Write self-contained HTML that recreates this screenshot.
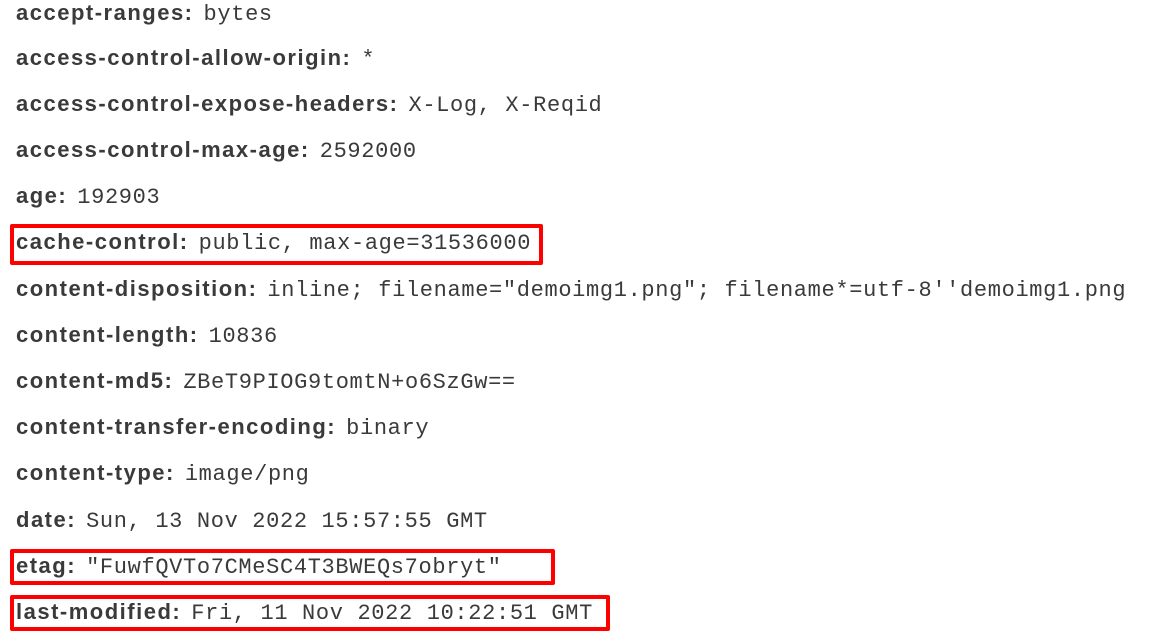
<!DOCTYPE html>
<html><head><style>
body{margin:0;width:1154px;height:641px;background:#fff;overflow:hidden;position:relative;color:#333;}
.r{position:absolute;left:16px;height:46px;line-height:46px;white-space:nowrap;}
.n{font-family:"Liberation Sans",sans-serif;font-weight:bold;font-size:22px;letter-spacing:1.5px;color:#3a3a3a;}
.v{font-family:"Liberation Mono",monospace;font-size:22px;letter-spacing:0.65px;color:#3a3a3a;margin-left:10px;}
.b{position:absolute;border:4px solid #f00;box-sizing:border-box;border-radius:2px;}
</style></head><body>
<div class="r" style="top:-10px"><span class="n">accept-ranges:</span><span class="v">bytes</span></div>
<div class="r" style="top:35px"><span class="n">access-control-allow-origin:</span><span class="v">*</span></div>
<div class="r" style="top:81px"><span class="n">access-control-expose-headers:</span><span class="v">X-Log, X-Reqid</span></div>
<div class="r" style="top:127px"><span class="n">access-control-max-age:</span><span class="v">2592000</span></div>
<div class="r" style="top:173px"><span class="n">age:</span><span class="v">192903</span></div>
<div class="r" style="top:219px"><span class="n">cache-control:</span><span class="v">public, max-age=31536000</span></div>
<div class="r" style="top:266px"><span class="n">content-disposition:</span><span class="v">inline; filename="demoimg1.png"; filename*=utf-8''demoimg1.png</span></div>
<div class="r" style="top:312px"><span class="n">content-length:</span><span class="v">10836</span></div>
<div class="r" style="top:358px"><span class="n">content-md5:</span><span class="v">ZBeT9PIOG9tomtN+o6SzGw==</span></div>
<div class="r" style="top:404px"><span class="n">content-transfer-encoding:</span><span class="v">binary</span></div>
<div class="r" style="top:450px"><span class="n">content-type:</span><span class="v">image/png</span></div>
<div class="r" style="top:497px"><span class="n">date:</span><span class="v">Sun, 13 Nov 2022 15:57:55 GMT</span></div>
<div class="r" style="top:543px"><span class="n">etag:</span><span class="v">"FuwfQVTo7CMeSC4T3BWEQs7obryt"</span></div>
<div class="r" style="top:589px"><span class="n">last-modified:</span><span class="v">Fri, 11 Nov 2022 10:22:51 GMT</span></div>
<div class="b" style="left:10px;top:224px;width:533px;height:41px"></div>
<div class="b" style="left:10px;top:549px;width:545px;height:36px"></div>
<div class="b" style="left:10px;top:595px;width:600px;height:36px"></div>
</body></html>
